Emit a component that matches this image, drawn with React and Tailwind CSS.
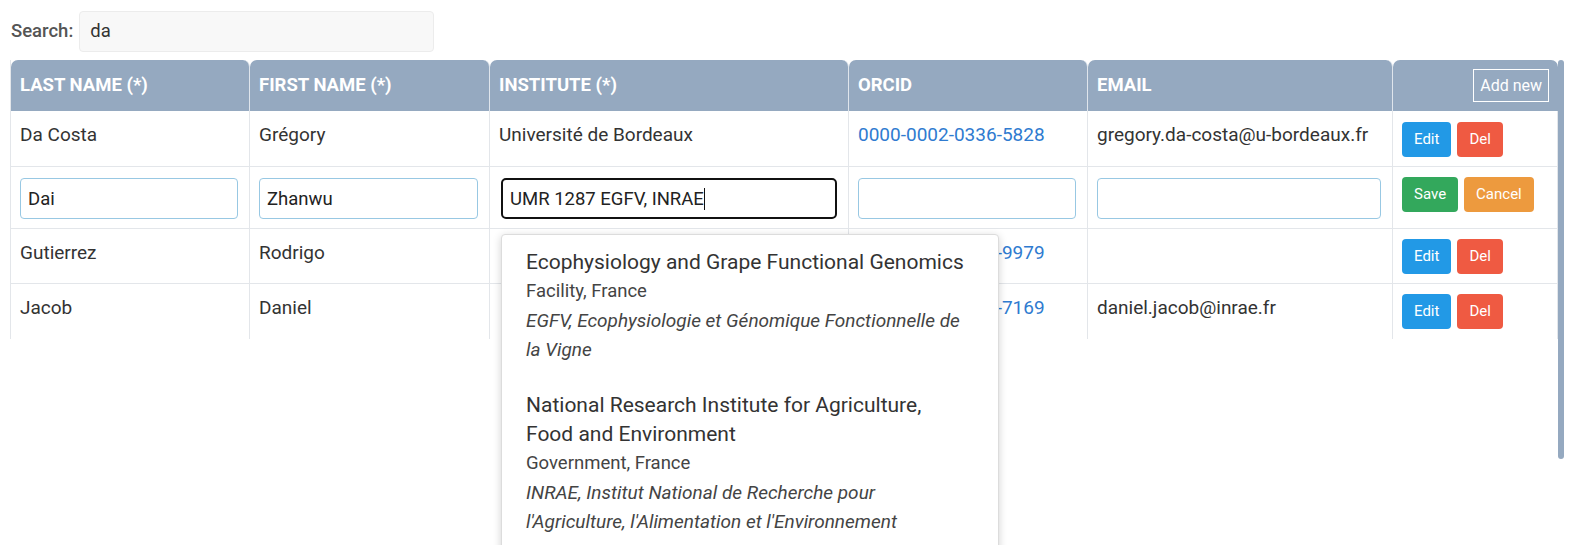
import React from 'react';

const rows = [
  { last: 'Da Costa', first: 'Grégory', inst: 'Université de Bordeaux', orcid: '0000-0002-0336-5828', email: 'gregory.da-costa@u-bordeaux.fr', btnPad: 'pt-[11px] pb-[9px]' },
  { edit: true, last: 'Dai', first: 'Zhanwu', inst: 'UMR 1287 EGFV, INRAE' },
  { last: 'Gutierrez', first: 'Rodrigo', inst: '', orcid: '0000-0002-9979-9979', email: '', btnPad: 'pt-[10px] pb-[9px]' },
  { last: 'Jacob', first: 'Daniel', inst: '', orcid: '0000-0002-7169-7169', email: 'daniel.jacob@inrae.fr', lastRow: true, btnPad: 'pt-[10px] pb-[10px]' },
];

const suggestions = [
  {
    name: 'Ecophysiology and Grape Functional Genomics',
    meta: 'Facility, France',
    alt: 'EGFV, Ecophysiologie et Génomique Fonctionnelle de la Vigne',
  },
  {
    name: 'National Research Institute for Agriculture, Food and Environment',
    meta: 'Government, France',
    alt: "INRAE, Institut National de Recherche pour l'Agriculture, l'Alimentation et l'Environnement",
  },
];

const th = 'bg-[#95a9c0] text-white font-bold text-left uppercase text-[18.5px] h-[51px] px-[9px] rounded-t-[7px] border-r border-[#dfe5ec] align-middle';
const td = 'border-r border-[#e3e6ea] align-top leading-[24px]';
const textPad = 'px-[9px] pt-[12px] pb-[9px]';
const inputPad = 'pl-[9px] pr-[11px] pt-[11px] pb-[9px]';
const editInput = 'w-full h-[41px] rounded-[4px] border border-[#98c8e3] px-[7px] text-[18.5px] text-[#222] outline-none bg-white';

function Btn({ color, children }) {
  return (
    <button className={`${color} text-white text-[15px] h-[35px] px-[12px] rounded-[4px] leading-none`}>
      {children}
    </button>
  );
}

export default function App() {
  return (
    <div className="w-[1586px] h-[545px] overflow-hidden bg-white text-[#333] font-['Roboto','Liberation_Sans',sans-serif]">
      <div className="flex items-center gap-[6px] pt-[11px] pl-[11px] h-[52px]">
        <span className="text-[18.5px] font-medium text-[#555]">Search:</span>
        <div className="w-[355px] h-[41px] rounded-[4px] border border-[#ececec] bg-[#f8f8f8] flex items-center px-[10px] text-[18.5px] text-[#333]">
          da
        </div>
      </div>

      <div className="flex pl-[10px] pt-[8px]">
        <div className="w-[1547px]">
          <table className="table-fixed border-separate border-spacing-0 w-[1547px] border-l border-[#e3e6ea]">
            <colgroup>
              <col className="w-[239px]" />
              <col className="w-[240px]" />
              <col className="w-[359px]" />
              <col className="w-[239px]" />
              <col className="w-[305px]" />
              <col className="w-[165px]" />
            </colgroup>
            <thead>
              <tr>
                <th className={th}>Last name (*)</th>
                <th className={th}>First name (*)</th>
                <th className={th}>Institute (*)</th>
                <th className={th}>Orcid</th>
                <th className={th}>Email</th>
                <th className="bg-[#95a9c0] text-white text-right h-[51px] pl-[9px] pr-[9px] rounded-t-[7px] align-middle">
                  <span className="inline-flex items-center justify-center h-[33px] px-[6px] border border-white text-[16px] font-normal">
                    Add new
                  </span>
                </th>
              </tr>
            </thead>
            <tbody className="text-[19px]">
              {rows.map((r, i) => {
                const cell = `${td} ${r.lastRow ? '' : 'border-b'}`;
                return r.edit ? (
                  <tr key={i}>
                    <td className={`${cell} ${inputPad}`}>
                      <input className={editInput} defaultValue={r.last} />
                    </td>
                    <td className={`${cell} ${inputPad}`}>
                      <input className={editInput} defaultValue={r.first} />
                    </td>
                    <td className={`${cell} relative pl-[11px] pr-[11px] pt-[11px] pb-[9px]`}>
                      <div className="h-[41px] rounded-[5px] border-2 border-[#111] px-[7px] flex items-center text-[18.5px] text-[#222]">
                        UMR 1287 EGFV, INRAE
                        <span className="inline-block w-[1px] h-[22px] bg-[#111]"></span>
                      </div>
                      <div className="absolute left-[11px] top-[67px] w-[498px] bg-white border border-[#dcdcdc] rounded-t-[4px] shadow-[0_2px_8px_rgba(0,0,0,0.18)] pl-[24px] pr-[28px] pt-[13px] pb-[20px] z-10">
                        {suggestions.map((s, k) => (
                          <div key={k} className={k > 0 ? 'mt-[27px]' : ''}>
                            <div className="text-[21px] leading-[29px] text-[#333]">{s.name}</div>
                            <div className="text-[18.5px] leading-[29px] text-[#444]">{s.meta}</div>
                            <div className="text-[19px] leading-[29px] italic text-[#444]">{s.alt}</div>
                          </div>
                        ))}
                      </div>
                    </td>
                    <td className={`${cell} ${inputPad}`}>
                      <input className={editInput} />
                    </td>
                    <td className={`${cell} ${inputPad}`}>
                      <input className={editInput} />
                    </td>
                    <td className={`${cell} pl-[9px] pt-[10px] pb-[9px]`}>
                      <div className="flex gap-[6px]">
                        <Btn color="bg-[#33a85c]">Save</Btn>
                        <Btn color="bg-[#ed9a3e]">Cancel</Btn>
                      </div>
                    </td>
                  </tr>
                ) : (
                  <tr key={i}>
                    <td className={`${cell} ${textPad}`}>{r.last}</td>
                    <td className={`${cell} ${textPad}`}>{r.first}</td>
                    <td className={`${cell} ${textPad}`}>{r.inst}</td>
                    <td className={`${cell} ${textPad} text-[#2f7bd0]`}>{r.orcid}</td>
                    <td className={`${cell} ${textPad}`}>{r.email}</td>
                    <td className={`${cell} pl-[9px] ${r.btnPad}`}>
                      <div className="flex gap-[6px]">
                        <Btn color="bg-[#2299e6]">Edit</Btn>
                        <Btn color="bg-[#ef5a42]">Del</Btn>
                      </div>
                    </td>
                  </tr>
                );
              })}
            </tbody>
          </table>
        </div>
        <div className="w-[6px] h-[399px] ml-[1px] rounded-full bg-[#95a9c0]"></div>
      </div>
    </div>
  );
}
